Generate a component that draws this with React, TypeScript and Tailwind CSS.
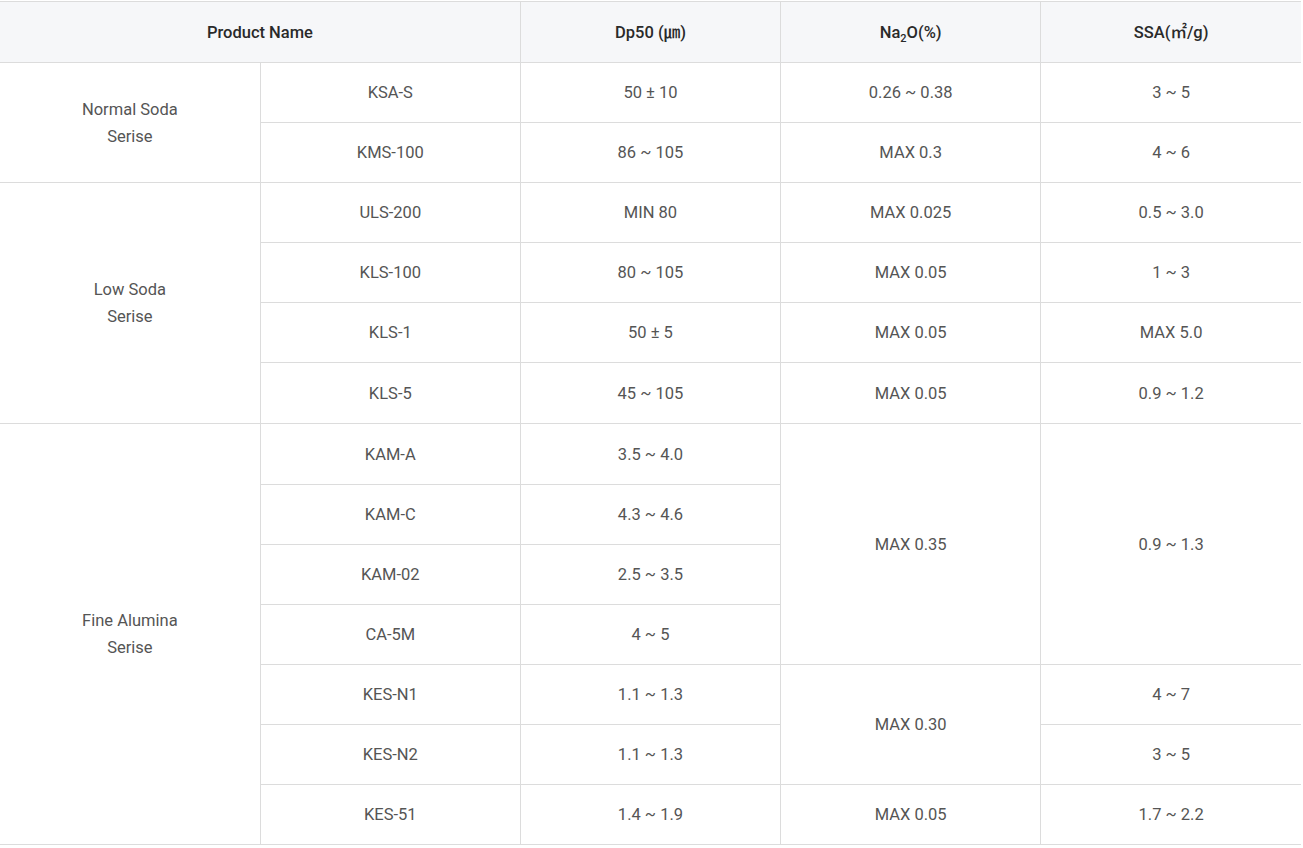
import React from "react";

type Cell = { text: React.ReactNode; col: number; rowSpan?: number };

// body rows, each cell knows its column so borders line up under rowSpans
const rows: Cell[][] = [
  [
    { text: <>Normal Soda<br />Serise</>, col: 0, rowSpan: 2 },
    { text: "KSA-S", col: 1 },
    { text: "50 ± 10", col: 2 },
    { text: "0.26 ~ 0.38", col: 3 },
    { text: "3 ~ 5", col: 4 },
  ],
  [
    { text: "KMS-100", col: 1 },
    { text: "86 ~ 105", col: 2 },
    { text: "MAX 0.3", col: 3 },
    { text: "4 ~ 6", col: 4 },
  ],
  [
    { text: <>Low Soda<br />Serise</>, col: 0, rowSpan: 4 },
    { text: "ULS-200", col: 1 },
    { text: "MIN 80", col: 2 },
    { text: "MAX 0.025", col: 3 },
    { text: "0.5 ~ 3.0", col: 4 },
  ],
  [
    { text: "KLS-100", col: 1 },
    { text: "80 ~ 105", col: 2 },
    { text: "MAX 0.05", col: 3 },
    { text: "1 ~ 3", col: 4 },
  ],
  [
    { text: "KLS-1", col: 1 },
    { text: "50 ± 5", col: 2 },
    { text: "MAX 0.05", col: 3 },
    { text: "MAX 5.0", col: 4 },
  ],
  [
    { text: "KLS-5", col: 1 },
    { text: "45 ~ 105", col: 2 },
    { text: "MAX 0.05", col: 3 },
    { text: "0.9 ~ 1.2", col: 4 },
  ],
  [
    { text: <>Fine Alumina<br />Serise</>, col: 0, rowSpan: 7 },
    { text: "KAM-A", col: 1 },
    { text: "3.5 ~ 4.0", col: 2 },
    { text: "MAX 0.35", col: 3, rowSpan: 4 },
    { text: "0.9 ~ 1.3", col: 4, rowSpan: 4 },
  ],
  [
    { text: "KAM-C", col: 1 },
    { text: "4.3 ~ 4.6", col: 2 },
  ],
  [
    { text: "KAM-02", col: 1 },
    { text: "2.5 ~ 3.5", col: 2 },
  ],
  [
    { text: "CA-5M", col: 1 },
    { text: "4 ~ 5", col: 2 },
  ],
  [
    { text: "KES-N1", col: 1 },
    { text: "1.1 ~ 1.3", col: 2 },
    { text: "MAX 0.30", col: 3, rowSpan: 2 },
    { text: "4 ~ 7", col: 4 },
  ],
  [
    { text: "KES-N2", col: 1 },
    { text: "1.1 ~ 1.3", col: 2 },
    { text: "3 ~ 5", col: 4 },
  ],
  [
    { text: "KES-51", col: 1 },
    { text: "1.4 ~ 1.9", col: 2 },
    { text: "MAX 0.05", col: 3 },
    { text: "1.7 ~ 2.2", col: 4 },
  ],
];

const font = { fontFamily: "Roboto, 'Noto Sans CJK KR', sans-serif" };

export default function App() {
  return (
    <div className="min-h-screen bg-white pt-px" style={font}>
      <table className="w-[1301px] table-fixed border-collapse text-center text-[16.5px] leading-[27px]">
        <thead>
          <tr className="h-[61px] bg-[#f6f7f9] text-[#2a2a2a]">
            <th colSpan={2} className="border-y border-[#dcdcdc] font-medium">
              Product Name
            </th>
            <th className="border-y border-l border-[#dcdcdc] font-medium">Dp50 (㎛)</th>
            <th className="border-y border-l border-[#dcdcdc] font-medium">
              Na<sub className="text-[11px] align-[-2px]">2</sub>O(%)
            </th>
            <th className="border-y border-l border-[#dcdcdc] font-medium">SSA(㎡/g)</th>
          </tr>
        </thead>
        <tbody className="text-[#555]">
          {rows.map((row, i) => (
            <tr key={i} className={i === 5 || i === 6 ? "h-[61px]" : "h-[60px]"}>
              {row.map((cell) => (
                <td
                  key={cell.col}
                  rowSpan={cell.rowSpan}
                  className={
                    cell.col === 0
                      ? "border-b border-[#dcdcdc] align-middle"
                      : "border-b border-l border-[#dcdcdc] align-middle"
                  }
                >
                  {cell.text}
                </td>
              ))}
            </tr>
          ))}
        </tbody>
      </table>
    </div>
  );
}
